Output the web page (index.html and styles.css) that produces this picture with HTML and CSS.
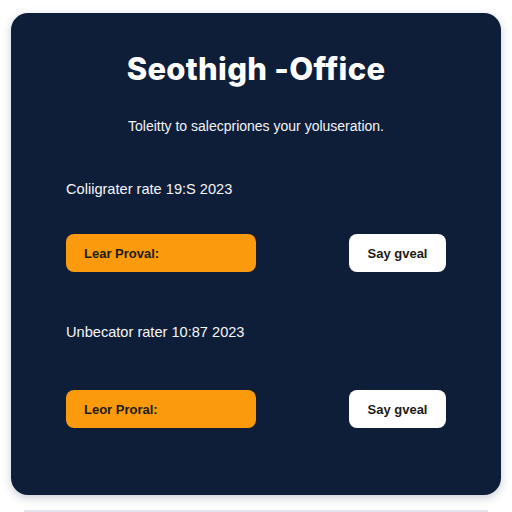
FILE: index.html
```html
<!DOCTYPE html>
<html>
<head>
<meta charset="utf-8">
<link rel="stylesheet" href="styles.css">
</head>
<body>
<div class="card">
  <h1 class="title">Seothigh -Office</h1>
  <p class="subtitle">Toleitty to salecpriones your yoluseration.</p>
  <div class="section first">
    <p class="label">Coliigrater rate 19:S 2023</p>
    <div class="row gap1">
      <button class="btn primary">Lear Proval:</button>
      <button class="btn secondary">Say gveal</button>
    </div>
  </div>
  <div class="section second">
    <p class="label">Unbecator rater 10:87 2023</p>
    <div class="row gap2">
      <button class="btn primary">Leor Proral:</button>
      <button class="btn secondary">Say gveal</button>
    </div>
  </div>
</div>
<div class="footer-line"></div>
</body>
</html>
```
FILE: styles.css
```css
html, body {
  margin: 0;
  padding: 0;
  background: #ffffff;
}
body {
  width: 512px;
  height: 512px;
  overflow: hidden;
  font-family: "Liberation Sans", Arial, sans-serif;
}
.card {
  margin: 13px 0 0 11px;
  width: 490px;
  height: 482px;
  box-sizing: border-box;
  background: #0f1e38;
  border-radius: 17px;
  padding: 38px 55px 0 55px;
  box-shadow: 0 3px 10px rgba(40, 60, 90, 0.25);
  display: flex;
  flex-direction: column;
}
.title {
  margin: 0;
  text-align: center;
  color: #ffffff;
  font-family: "Inter", "Open Sans", sans-serif;
  font-weight: 800;
  font-size: 31px;
  line-height: 36px;
  letter-spacing: 0.3px;
}
.subtitle {
  margin: 29px 0 0 0;
  text-align: center;
  color: #f2f4f8;
  font-size: 14px;
  line-height: 20px;
}
.section.first { margin-top: 43px; }
.section.second { margin-top: 50px; }
.label {
  margin: 0;
  color: #f4f6fa;
  font-size: 14.6px;
  line-height: 20px;
}
.row {
  display: flex;
  justify-content: space-between;
  align-items: center;
}
.row.gap1 { margin-top: 35px; }
.row.gap2 { margin-top: 48px; }
.btn {
  height: 38px;
  border: none;
  border-radius: 8px;
  font-family: "Liberation Sans", Arial, sans-serif;
  font-size: 13px;
  font-weight: 700;
  color: #1d1a16;
  padding: 0;
}
.btn.primary {
  width: 190px;
  background: #fb9a0c;
  text-align: left;
  padding-left: 18px;
}
.btn.secondary {
  width: 97px;
  background: #ffffff;
  text-align: center;
}
.footer-line {
  margin: 15px 0 0 24px;
  width: 464px;
  height: 2px;
  background: #e2e6ec;
}
```
